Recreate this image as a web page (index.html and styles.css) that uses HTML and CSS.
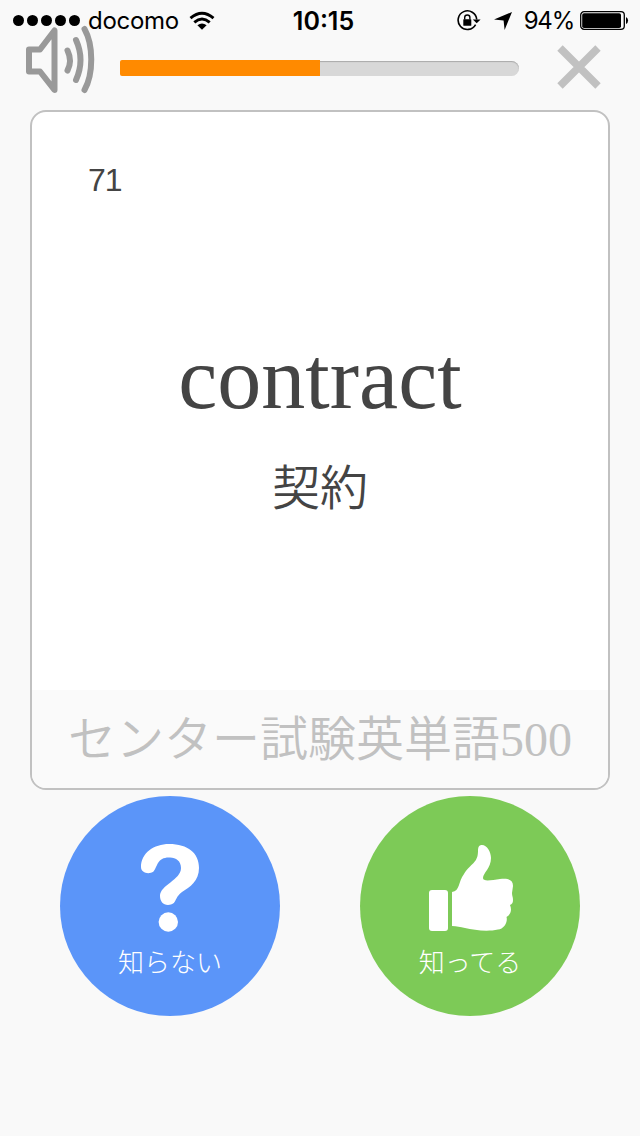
FILE: index.html
```html
<!DOCTYPE html>
<html lang="ja">
<head>
  <meta charset="UTF-8" />
  <meta name="viewport" content="width=device-width, initial-scale=1" />
  <title>センター試験英単語500</title>
  <link rel="stylesheet" href="styles.css">
</head>
<body>

  <div class="status-bar">
    <div class="status-left">
      <div class="signal"><i></i><i></i><i></i><i></i><i></i></div>
      <span class="carrier">docomo</span>
      <svg class="wifi" width="26" height="20" viewBox="0 0 26 20">
        <g fill="none" stroke="#000" stroke-width="2.9">
          <path d="M1.5 7.2 Q13 -2.8 24.5 7.2" />
          <path d="M5.3 11.3 Q13 4.7 20.7 11.3" />
        </g>
        <path d="M8.4 14.2 Q13 10.6 17.6 14.2 L13 18.8 Z" />
      </svg>
    </div>
    <span class="time">10:15</span>
    <div class="status-right">
      <svg class="lock" width="24" height="22" viewBox="0 0 24 22">
        <path d="M18.6 14.6 A9.3 9.3 0 1 1 19.7 9.5" fill="none" stroke="#000" stroke-width="1.6" />
        <path d="M15.8 9.4 H23.6 L19.7 13.2 Z" />
        <rect x="6.3" y="9.2" width="8" height="6.6" rx=".6" />
        <path d="M7.7 9.5 V7.6 a2.6 2.6 0 0 1 5.2 0 V9.5" fill="none" stroke="#000" stroke-width="1.4" />
      </svg>
      <svg class="arrow" width="18" height="18" viewBox="0 0 18 18">
        <path d="M18 0 L10.6 18 L9.6 8.4 L0 7.5 Z" />
      </svg>
      <span class="percent">94%</span>
      <svg class="battery" width="49" height="20" viewBox="0 0 49 20">
        <rect x=".7" y=".7" width="43.6" height="17.6" rx="3.4" fill="none" stroke="#000" stroke-width="1.3" />
        <rect x="2.2" y="2.2" width="38.8" height="14.8" rx="1.8" />
        <path d="M46 6 a4 4 0 0 1 0 7 Z" />
      </svg>
    </div>
  </div>

  <div class="toolbar">
    <svg class="speaker" width="70" height="70" viewBox="0 0 70 70">
      <g fill="none" stroke="#999" stroke-width="6" stroke-linecap="round" stroke-linejoin="round">
        <path d="M29.5 5.5 V65 L15 46.5 H4 V24.5 H15 Z" />
        <path d="M42.5 25.5 Q47.5 36 42.5 45.5" />
        <path d="M51 15 Q60 35 51 55" />
        <path d="M59.5 4 C68.5 20 68.5 49 59.5 65" />
      </g>
    </svg>
    <div class="progress"><div class="progress-value" style="width: 50%"></div></div>
    <svg class="close" width="44" height="44" viewBox="0 0 44 44">
      <path d="M3 3 L41 41 M41 3 L3 41" stroke="#c1c1c1" stroke-width="7.6" />
    </svg>
  </div>

  <div class="card">
    <div class="card-body">
      <div class="number">71</div>
      <div class="word">contract</div>
      <div class="meaning">契約</div>
    </div>
    <div class="card-footer">センター試験英単語500</div>
  </div>

  <div class="answers">
    <div class="answer unknown">
      <svg width="90" height="90" viewBox="0 0 90 90">
        <path fill="#fff" d="M16 25 C16 11 29 2 44 2 C63 2 74 11 74 26 C74 39 65 45 57 50 C48 57 53 62 43 63 C38 63 35 59 35 54 C35 43 56 38 56 26 C56 19 51 15.500 45 15.500 C32 15 33 24 28.500 29.500 C24 33 16 31 16 25 Z" />
        <circle cx="43.300" cy="80" r="9.700" fill="#fff" />
      </svg>
      <span>知らない</span>
    </div>
    <div class="answer known">
      <svg width="90" height="90" viewBox="0 0 90 90">
        <rect x="4" y="48" width="19" height="41" rx="3" fill="#fff" />
        <path fill="#fff" d="M27 50 C35 49 33 40 39 32 C46 21 53 21 53 9 C53 5 54 3 57 3 C62 3 66 10 66 16 C66 26 58 31 58 36 C58 40 67 38 75 37 C84 36 88 38 88 44 L87 51 C87 54 88 55 88 58 C88 61 87 62 85 63 C87 68 86 72 81.500 75 C83 80 79 87 73 87.500 C62 90 49 88 40 86 C35 85 32 84 27 84 Z" />
      </svg>
      <span>知ってる</span>
    </div>
  </div>

</body>
</html>
```
FILE: styles.css
```css
body {
  margin: 0;
  background: #f9f9f9;
  color: #444;
  font-family: "Liberation Sans", "Noto Sans CJK JP", sans-serif;
}

.status-bar {
  display: grid;
  grid-template-columns: 1fr auto 1fr;
  align-items: center;
  height: 40px;
  padding: 1px 11px 0 13px;
  box-sizing: border-box;
  color: #000;
  font-family: Inter, sans-serif;
  font-size: 24px;
}

.status-left,
.status-right {
  display: flex;
  align-items: center;
}

.status-right {
  justify-content: flex-end;
}

.signal {
  display: flex;
  gap: 3px;
}

.signal i {
  width: 11px;
  height: 11px;
  border-radius: 50%;
  background: #000;
}

.carrier {
  margin: 0 10px 0 8px;
  letter-spacing: -0.3px;
}

.time {
  margin-left: 5px;
  font-size: 25px;
  font-weight: 600;
}

.arrow {
  margin: 0 12px 0 13px;
}

.percent {
  margin-right: 6px;
  letter-spacing: -1.2px;
}

.toolbar {
  display: flex;
  align-items: center;
  height: 56px;
  padding: 0 39px 14px 25px;
}

.speaker {
  margin-top: -16px;
}

.progress {
  width: 399px;
  height: 15px;
  margin-left: 25px;
  border-radius: 8px;
  background: #d8d8d8;
  box-shadow: inset 0 1px 1px #aaa;
}

.progress-value {
  height: 16px;
  margin-top: -1px;
  border-radius: 2px 0 0 2px;
  background: #ff8a00;
}

.close {
  margin: -2px 0 0 auto;
}

.card {
  display: flex;
  flex-direction: column;
  box-sizing: border-box;
  width: 580px;
  height: 680px;
  margin: 0 auto;
  border: 2px solid #c1c1c1;
  border-radius: 16px;
  background: #fff;
  overflow: hidden;
}

.card-body {
  display: flow-root;
  flex: 1;
  text-align: center;
}

.number {
  padding: 49px 0 0 56px;
  font-size: 32px;
  letter-spacing: -1px;
  line-height: 38px;
  text-align: left;
}

.word {
  margin-top: 130px;
  font-family: "Liberation Serif", serif;
  font-size: 88px;
  line-height: 100px;
}

.meaning {
  margin-top: 19px;
  font-family: "Noto Sans CJK JP", sans-serif;
  font-size: 48px;
  font-weight: 350;
  line-height: 72px;
}

.card-footer {
  height: 98px;
  background: #fafafa;
  color: #c1c1c1;
  font-family: "Liberation Serif", "Noto Sans CJK JP", serif;
  font-size: 48px;
  font-weight: 350;
  line-height: 99px;
  text-align: center;
  white-space: nowrap;
}

.answers {
  display: flex;
  justify-content: center;
  gap: 80px;
  margin-top: 6px;
}

.answer {
  display: flex;
  flex-direction: column;
  align-items: center;
  box-sizing: border-box;
  width: 220px;
  height: 220px;
  padding-top: 46px;
  border-radius: 50%;
  color: #fff;
  font-family: "Noto Sans CJK JP", sans-serif;
  font-size: 26px;
  font-weight: 300;
  line-height: 38px;
}

.answer span {
  margin-top: 10px;
}

.unknown {
  background: #5b95f9;
}

.known {
  background: #7dca57;
}
```
